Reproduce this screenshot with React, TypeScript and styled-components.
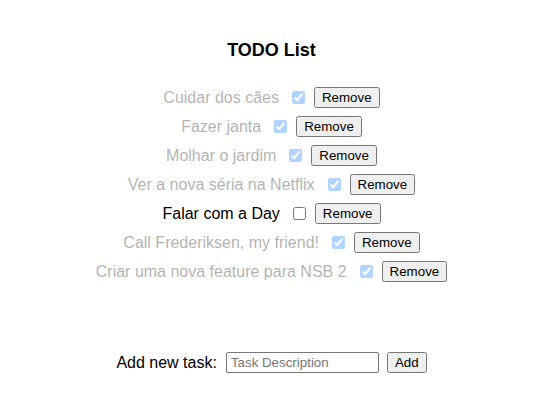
import React, { FormEvent, useState } from 'react'
import styled, { createGlobalStyle } from 'styled-components'

const GlobalStyle = createGlobalStyle`
  body {
    margin: 0;
    background: #ffffff;
    font-family: "Liberation Sans", Arial, Helvetica, sans-serif;
    color: #000000;
  }
`

const Page = styled.div`
  display: flex;
  flex-direction: column;
  align-items: center;
  padding: 40px 0 0 3px;
`

const Title = styled.h3`
  margin: 0;
  font-size: 18px;
  line-height: 21px;
  font-weight: bold;
`

const TaskList = styled.ul`
  list-style: none;
  margin: 22px 0 0;
  padding: 0;
  display: flex;
  flex-direction: column;
  align-items: center;
`

const TaskRow = styled.li`
  height: 29px;
  display: flex;
  align-items: center;
`

const TaskLabel = styled.label<{ $done: boolean }>`
  display: flex;
  align-items: center;
  opacity: ${(p) => (p.$done ? 0.3 : 1)};
  font-size: 16px;
  line-height: 18px;
`

const TaskCheck = styled.input`
  width: 13px;
  height: 13px;
  margin: 0 0 0 13px;
`

const SmallButton = styled.button`
  font-family: "Liberation Sans", Arial, Helvetica, sans-serif;
  font-size: 13.333px;
  line-height: 15px;
  padding: 1px 6px;
  height: 21px;
  margin-left: 9px;
  color: #000000;
`

const AddForm = styled.form`
  margin-top: 66px;
  display: flex;
  align-items: center;
  height: 21px;
`

const AddLabel = styled.label`
  font-size: 16px;
  line-height: 18px;
  margin-right: 9px;
`

const TaskInput = styled.input`
  box-sizing: border-box;
  width: 153px;
  height: 21px;
  padding: 1px 3px;
  font-family: "Liberation Sans", Arial, Helvetica, sans-serif;
  font-size: 13.333px;
  margin: 0;
  &::placeholder {
    color: #757575;
  }
`

const AddButton = styled(SmallButton)`
  margin-left: 8px;
`

type Task = { id: number; text: string; done: boolean }

const initial: Task[] = [
  { id: 1, text: 'Cuidar dos cães', done: true },
  { id: 2, text: 'Fazer janta', done: true },
  { id: 3, text: 'Molhar o jardim', done: true },
  { id: 4, text: 'Ver a nova séria na Netflix', done: true },
  { id: 5, text: 'Falar com a Day', done: false },
  { id: 6, text: 'Call Frederiksen, my friend!', done: true },
  { id: 7, text: 'Criar uma nova feature para NSB 2', done: true },
]

const App: React.FC = () => {
  const [tasks, setTasks] = useState<Task[]>(initial)
  const [desc, setDesc] = useState('')

  const toggle = (id: number) =>
    setTasks((t) => t.map((x) => (x.id === id ? { ...x, done: !x.done } : x)))
  const remove = (id: number) => setTasks((t) => t.filter((x) => x.id !== id))

  const submitHandler = (e: FormEvent) => {
    e.preventDefault()
    if (!desc.trim()) return
    setTasks((t) => [...t, { id: Date.now(), text: desc, done: false }])
    setDesc('')
  }

  return (
    <>
      <GlobalStyle />
      <Page>
        <Title>TODO List</Title>
        <TaskList>
          {tasks.map((task) => (
            <TaskRow key={task.id}>
              <TaskLabel $done={task.done}>
                {task.text}
                <TaskCheck type="checkbox" checked={task.done} onChange={() => toggle(task.id)} />
              </TaskLabel>
              <SmallButton type="button" onClick={() => remove(task.id)}>Remove</SmallButton>
            </TaskRow>
          ))}
        </TaskList>
        <AddForm onSubmit={submitHandler}>
          <AddLabel htmlFor="new-task">Add new task:</AddLabel>
          <TaskInput
            id="new-task"
            placeholder="Task Description"
            value={desc}
            onChange={(e) => setDesc(e.target.value)}
          />
          <AddButton type="submit">Add</AddButton>
        </AddForm>
      </Page>
    </>
  )
}

export default App
